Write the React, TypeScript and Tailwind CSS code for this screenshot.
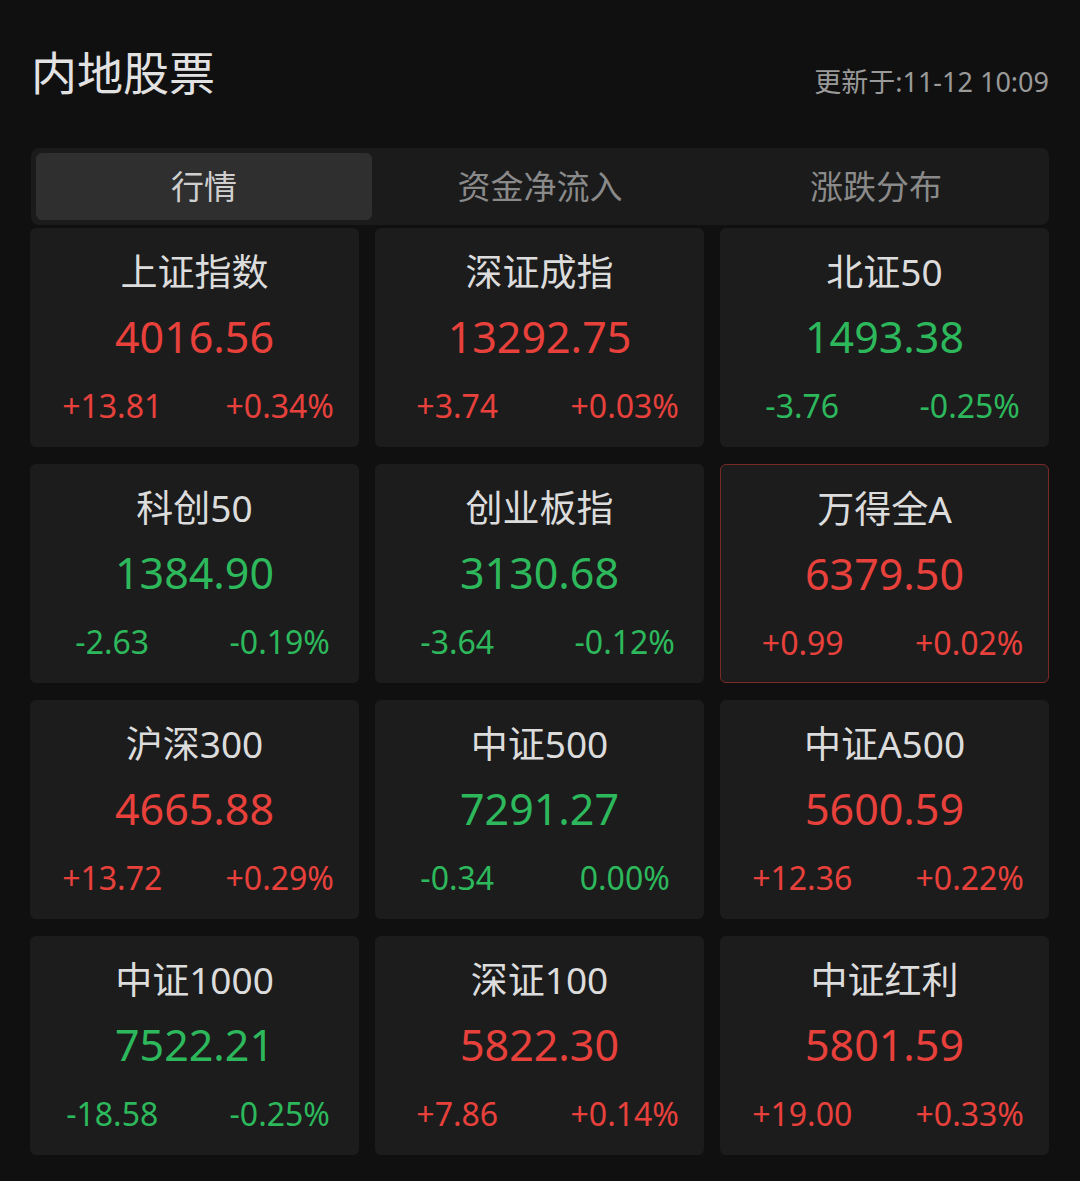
const FONT = "font-['Noto_Sans','Noto_Sans_CJK_SC',sans-serif]";

type Quote = {
  name: string;
  value: string;
  change: string;
  percent: string;
  up: boolean;
  selected?: boolean;
};

const quotes: Quote[] = [
  { name: "上证指数", value: "4016.56", change: "+13.81", percent: "+0.34%", up: true },
  { name: "深证成指", value: "13292.75", change: "+3.74", percent: "+0.03%", up: true },
  { name: "北证50", value: "1493.38", change: "-3.76", percent: "-0.25%", up: false },
  { name: "科创50", value: "1384.90", change: "-2.63", percent: "-0.19%", up: false },
  { name: "创业板指", value: "3130.68", change: "-3.64", percent: "-0.12%", up: false },
  { name: "万得全A", value: "6379.50", change: "+0.99", percent: "+0.02%", up: true, selected: true },
  { name: "沪深300", value: "4665.88", change: "+13.72", percent: "+0.29%", up: true },
  { name: "中证500", value: "7291.27", change: "-0.34", percent: "0.00%", up: false },
  { name: "中证A500", value: "5600.59", change: "+12.36", percent: "+0.22%", up: true },
  { name: "中证1000", value: "7522.21", change: "-18.58", percent: "-0.25%", up: false },
  { name: "深证100", value: "5822.30", change: "+7.86", percent: "+0.14%", up: true },
  { name: "中证红利", value: "5801.59", change: "+19.00", percent: "+0.33%", up: true },
];

const tabs = ["行情", "资金净流入", "涨跌分布"];

function QuoteCard({ q }: { q: Quote }) {
  const color = q.up ? "text-[#e8413c]" : "text-[#2db85c]";
  return (
    <div
      className={`h-[219px] rounded-[6px] bg-[#1c1c1c] flex flex-col items-center pt-[22px] ${
        q.selected ? "border border-[#7a2a24]" : ""
      }`}
    >
      <div className="text-[37px] leading-[44px] text-[#dcdcdc]">{q.name}</div>
      <div className={`mt-[15px] text-[43px] leading-[56px] ${color}`}>{q.value}</div>
      <div className={`mt-[21px] w-full grid grid-cols-2 text-[32px] leading-[40px] ${color}`}>
        <span className="text-center">{q.change}</span>
        <span className="text-center pl-[6px]">{q.percent}</span>
      </div>
    </div>
  );
}

export default function App() {
  return (
    <div className={`${FONT} min-h-[1181px] w-[1080px] bg-[#101010] px-[30px] pr-[31px]`}>
      <div className="h-[148px] flex justify-between items-start">
        <h1 className="mt-[46px] ml-[1px] text-[46px] leading-[52px] text-[#e2e2e2] font-normal">
          内地股票
        </h1>
        <div className="mt-[65px] text-[27px] leading-[34px] text-[#9a9a9a]">
          更新于:11-12 10:09
        </div>
      </div>

      <div className="ml-[1px] h-[77px] rounded-[8px] bg-[#1b1b1b] p-[5px] grid grid-cols-3">
        {tabs.map((t, i) => (
          <div
            key={t}
            className={`flex items-center justify-center rounded-[6px] text-[33px] ${
              i === 0 ? "bg-[#2f2f2f] text-[#cfcfcf]" : "text-[#8a8a8a]"
            }`}
          >
            {t}
          </div>
        ))}
      </div>

      <div className="mt-[3px] grid grid-cols-3 gap-x-[16px] gap-y-[17px]">
        {quotes.map((q) => (
          <QuoteCard key={q.name} q={q} />
        ))}
      </div>
    </div>
  );
}
